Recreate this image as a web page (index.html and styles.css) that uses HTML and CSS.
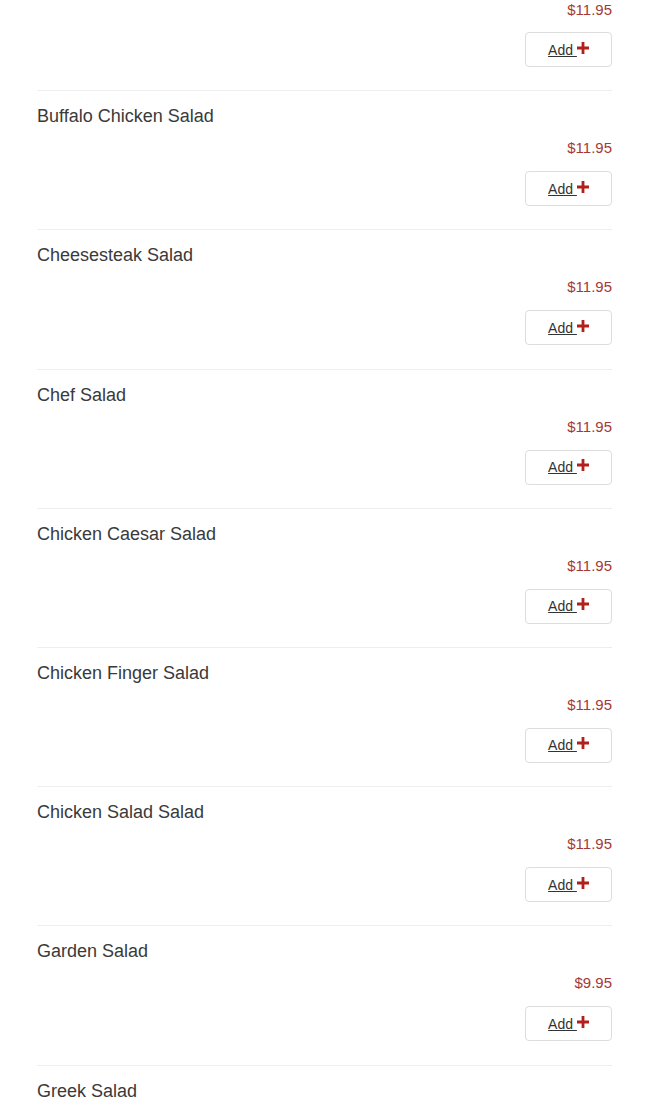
FILE: index.html
```html
<!DOCTYPE html>
<html lang="en">

<head>
    <meta charset="UTF-8">
    <meta name="viewport" content="width=device-width, initial-scale=1.0">
    <title>Salads</title>
    <link rel="stylesheet" href="styles.css">
</head>

<body>
    <div class="menu">
        <div class="item first">
            <div class="item-price">$11.95</div>
            <div class="item-actions">
                <a class="add-btn" href="#">Add <svg class="plus" viewBox="0 0 12 12"><path d="M4.6 0h2.8v4.6H12v2.8H7.4V12H4.6V7.4H0V4.6h4.6z" /></svg></a>
            </div>
        </div>
        <div class="item">
            <div class="item-name">Buffalo Chicken Salad</div>
            <div class="item-price">$11.95</div>
            <div class="item-actions">
                <a class="add-btn" href="#">Add <svg class="plus" viewBox="0 0 12 12"><path d="M4.6 0h2.8v4.6H12v2.8H7.4V12H4.6V7.4H0V4.6h4.6z" /></svg></a>
            </div>
        </div>
        <div class="item">
            <div class="item-name">Cheesesteak Salad</div>
            <div class="item-price">$11.95</div>
            <div class="item-actions">
                <a class="add-btn" href="#">Add <svg class="plus" viewBox="0 0 12 12"><path d="M4.6 0h2.8v4.6H12v2.8H7.4V12H4.6V7.4H0V4.6h4.6z" /></svg></a>
            </div>
        </div>
        <div class="item">
            <div class="item-name">Chef Salad</div>
            <div class="item-price">$11.95</div>
            <div class="item-actions">
                <a class="add-btn" href="#">Add <svg class="plus" viewBox="0 0 12 12"><path d="M4.6 0h2.8v4.6H12v2.8H7.4V12H4.6V7.4H0V4.6h4.6z" /></svg></a>
            </div>
        </div>
        <div class="item">
            <div class="item-name">Chicken Caesar Salad</div>
            <div class="item-price">$11.95</div>
            <div class="item-actions">
                <a class="add-btn" href="#">Add <svg class="plus" viewBox="0 0 12 12"><path d="M4.6 0h2.8v4.6H12v2.8H7.4V12H4.6V7.4H0V4.6h4.6z" /></svg></a>
            </div>
        </div>
        <div class="item">
            <div class="item-name">Chicken Finger Salad</div>
            <div class="item-price">$11.95</div>
            <div class="item-actions">
                <a class="add-btn" href="#">Add <svg class="plus" viewBox="0 0 12 12"><path d="M4.6 0h2.8v4.6H12v2.8H7.4V12H4.6V7.4H0V4.6h4.6z" /></svg></a>
            </div>
        </div>
        <div class="item">
            <div class="item-name">Chicken Salad Salad</div>
            <div class="item-price">$11.95</div>
            <div class="item-actions">
                <a class="add-btn" href="#">Add <svg class="plus" viewBox="0 0 12 12"><path d="M4.6 0h2.8v4.6H12v2.8H7.4V12H4.6V7.4H0V4.6h4.6z" /></svg></a>
            </div>
        </div>
        <div class="item">
            <div class="item-name">Garden Salad</div>
            <div class="item-price">$9.95</div>
            <div class="item-actions">
                <a class="add-btn" href="#">Add <svg class="plus" viewBox="0 0 12 12"><path d="M4.6 0h2.8v4.6H12v2.8H7.4V12H4.6V7.4H0V4.6h4.6z" /></svg></a>
            </div>
        </div>
        <div class="item">
            <div class="item-name">Greek Salad</div>
            <div class="item-price">$11.95</div>
            <div class="item-actions">
                <a class="add-btn" href="#">Add <svg class="plus" viewBox="0 0 12 12"><path d="M4.6 0h2.8v4.6H12v2.8H7.4V12H4.6V7.4H0V4.6h4.6z" /></svg></a>
            </div>
        </div>
    </div>
</body>

</html>
```

FILE: styles.css
```css
body {
    margin: 0;
    background: #fff;
    font-family: "Liberation Sans", Arial, sans-serif;
    color: #333;
}

.menu {
    padding: 0 38px 0 37px;
}

.item {
    border-top: 1px solid #eee;
    padding: 15px 0 23.2px;
}

/* list is scrolled: only the bottom of the first item shows */
.item.first {
    border-top: none;
    padding-top: 1px;
}

.item-name {
    font-size: 18px;
    line-height: 20px;
    color: #3a3a3a;
}

.item-price {
    margin-top: 13px;
    font-size: 15px;
    line-height: 18px;
    text-align: right;
    color: #a33a35;
}

.item.first .item-price {
    margin-top: 0;
}

.item-actions {
    display: flex;
    justify-content: flex-end;
    margin-top: 14px;
}

.item.first .item-actions {
    margin-top: 13px;
}

.add-btn {
    display: flex;
    align-items: center;
    justify-content: center;
    box-sizing: border-box;
    width: 87px;
    height: 35px;
    border: 1px solid #ddd;
    border-radius: 4px;
    font-size: 14px;
    color: #333;
    text-decoration: underline;
    white-space: pre;
}

.plus {
    width: 12px;
    height: 12px;
    fill: #b0201c;
    margin-bottom: 4px;
}
```
